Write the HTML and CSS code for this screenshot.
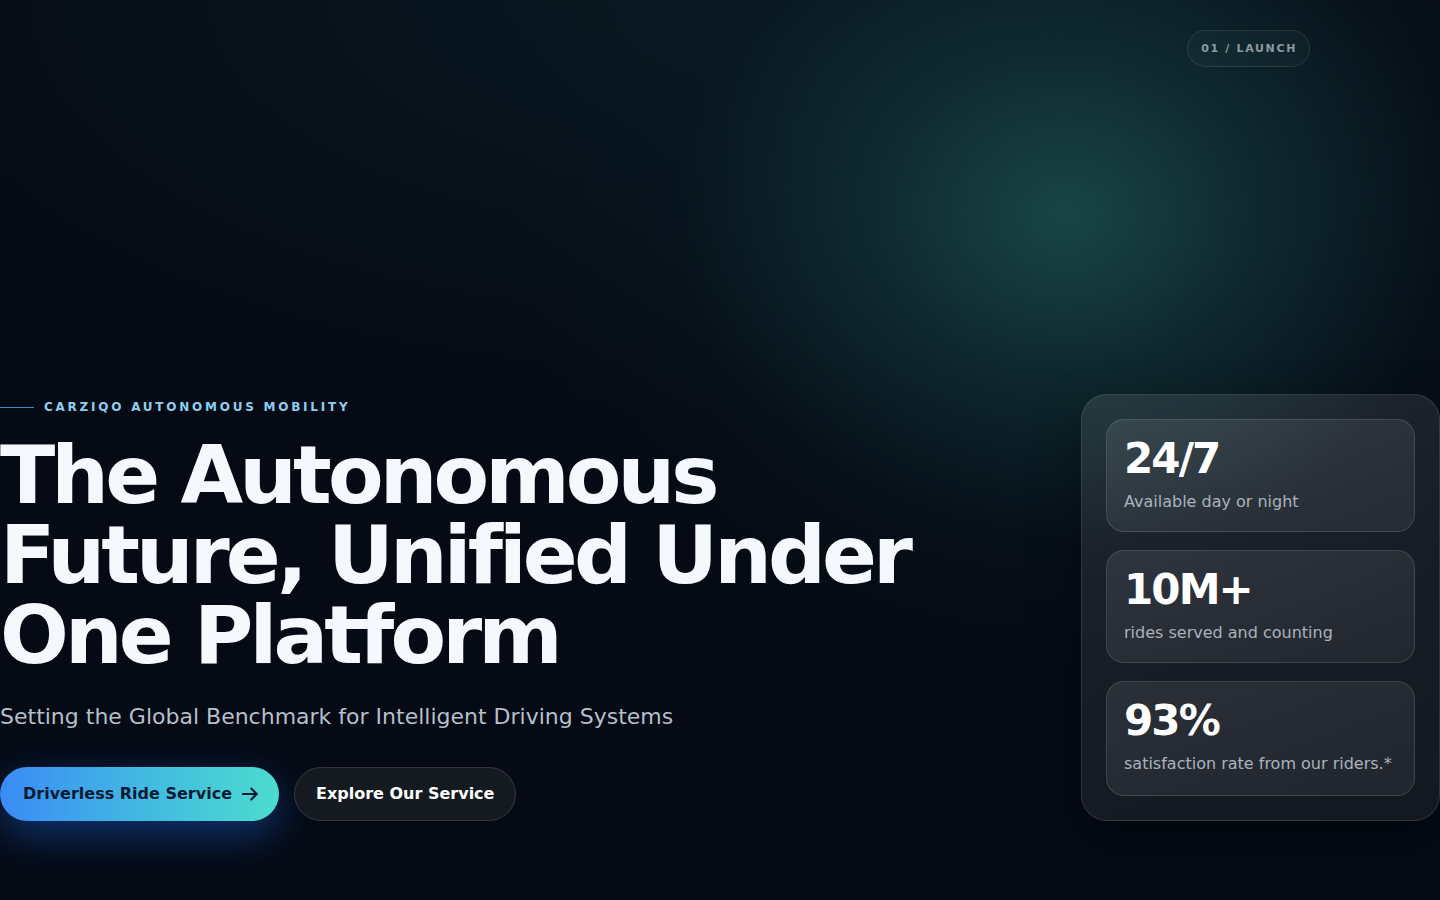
FILE: index.html
```html
<!DOCTYPE html>
<html lang="en">
<head>
<meta charset="utf-8">
<title>Carziqo Autonomous Mobility</title>
<link rel="stylesheet" href="styles.css">
</head>
<body>
<main class="page">
  <header class="topbar">
    <span class="badge">01 / LAUNCH</span>
  </header>
  <section class="hero">
    <div class="hero-copy">
      <p class="eyebrow"><span class="eyebrow-line"></span>CARZIQO AUTONOMOUS MOBILITY</p>
      <h1 class="title"><span class="title-line">The Autonomous</span><span class="title-line">Future, Unified Under</span><span class="title-line">One Platform</span></h1>
      <p class="subtitle">Setting the Global Benchmark for Intelligent Driving Systems</p>
      <div class="actions">
        <a class="btn btn-primary" href="#">Driverless Ride Service
          <svg class="btn-icon" viewBox="0 0 24 24" width="20" height="20" fill="none" stroke="currentColor" stroke-width="2.6" stroke-linecap="round" stroke-linejoin="round"><path d="M3.5 12h16.5"/><path d="M13.5 5.5l6.5 6.5-6.5 6.5"/></svg>
        </a>
        <a class="btn btn-secondary" href="#">Explore Our Service</a>
      </div>
    </div>
    <aside class="stats">
      <div class="stat">
        <div class="stat-value">24/7</div>
        <div class="stat-label">Available day or night</div>
      </div>
      <div class="stat">
        <div class="stat-value">10M+</div>
        <div class="stat-label">rides served and counting</div>
      </div>
      <div class="stat">
        <div class="stat-value">93%</div>
        <div class="stat-label">satisfaction rate from our riders.*</div>
      </div>
    </aside>
  </section>
</main>
</body>
</html>
```

FILE: styles.css
```css
* { box-sizing: border-box; }

html, body {
  margin: 0;
  padding: 0;
}

body {
  font-family: "DejaVu Sans", Verdana, sans-serif;
  color: #f4f7fb;
  background-color: #050a14;
  background-image:
    radial-gradient(ellipse 560px 470px at 1066px 215px, rgba(25, 72, 72, 0.95) 0%, rgba(20, 58, 62, 0.6) 35%, rgba(10, 28, 38, 0.25) 70%, rgba(5, 10, 20, 0) 100%),
    radial-gradient(ellipse 900px 420px at 700px 0px, rgba(12, 34, 42, 0.6) 0%, rgba(5, 10, 20, 0) 100%);
  min-height: 900px;
  overflow: hidden;
}

.page {
  height: 900px;
  display: flex;
  flex-direction: column;
  justify-content: space-between;
  padding: 30px 0 79px 0;
}

.topbar {
  display: flex;
  justify-content: flex-end;
  padding-right: 130px;
}

.badge {
  display: inline-block;
  font-size: 11px;
  font-weight: 700;
  letter-spacing: 0.15em;
  line-height: 13px;
  color: #8c98a4;
  padding: 11px 12px 11px 13px;
  border: 1px solid rgba(255, 255, 255, 0.1);
  border-radius: 999px;
  background: rgba(255, 255, 255, 0.025);
}

.hero {
  display: flex;
  justify-content: space-between;
  align-items: flex-end;
}

.hero-copy {
  display: flex;
  flex-direction: column;
  align-items: flex-start;
}

.eyebrow {
  margin: 0 0 19px 0;
  display: flex;
  align-items: center;
  gap: 10px;
  font-size: 12px;
  font-weight: 700;
  line-height: 18px;
  letter-spacing: 0.23em;
  color: #8ccff0;
}

.eyebrow-line {
  display: block;
  width: 34px;
  height: 1px;
  background: #3f86c8;
}

.title {
  margin: 0 0 24px 0;
  display: flex;
  flex-direction: column;
  font-size: 81px;
  line-height: 80px;
  font-weight: 700;
  letter-spacing: -0.048em;
  color: #f5f8fc;
}

.title-line {
  display: block;
  height: 80px;
  white-space: nowrap;
}

.subtitle {
  margin: 0 0 33px 0;
  font-size: 22px;
  line-height: 35px;
  color: #b7bfca;
}

.actions {
  display: flex;
  gap: 15px;
}

.btn {
  display: inline-flex;
  align-items: center;
  height: 54px;
  border-radius: 999px;
  font-size: 16px;
  font-weight: 700;
  line-height: 22px;
  text-decoration: none;
}

.btn-primary {
  gap: 8px;
  padding: 0 19px 0 23px;
  color: #0b1a33;
  background: linear-gradient(90deg, #3a8bf6 0%, #42b8e2 50%, #4cdccf 100%);
  box-shadow: 0 14px 40px rgba(30, 110, 240, 0.42);
}

.btn-icon {
  display: block;
}

.btn-secondary {
  color: #ffffff;
  background: #151a21;
  border: 1px solid rgba(255, 255, 255, 0.13);
  padding: 0 21px;
}

.stats {
  width: 359px;
  display: flex;
  flex-direction: column;
  gap: 18px;
  padding: 24px;
  border-radius: 26px;
  border: 1px solid rgba(255, 255, 255, 0.11);
  background: linear-gradient(160deg, rgba(255, 255, 255, 0.1) 0%, rgba(255, 255, 255, 0.075) 50%, rgba(255, 255, 255, 0.06) 100%);
  box-shadow: 0 20px 50px rgba(0, 0, 0, 0.35);
}

.stat {
  height: 113px;
  padding: 18px 17px 0 17px;
  border-radius: 18px;
  border: 1px solid rgba(255, 255, 255, 0.12);
  background: linear-gradient(160deg, rgba(255, 255, 255, 0.09) 0%, rgba(255, 255, 255, 0.06) 100%);
}

.stat:last-child {
  height: 115px;
}

.stat-value {
  font-size: 42px;
  line-height: 42px;
  font-weight: 700;
  letter-spacing: -0.045em;
  color: #ffffff;
}

.stat-label {
  margin-top: 10px;
  font-size: 16px;
  line-height: 24px;
  color: #aab2bd;
}
```
